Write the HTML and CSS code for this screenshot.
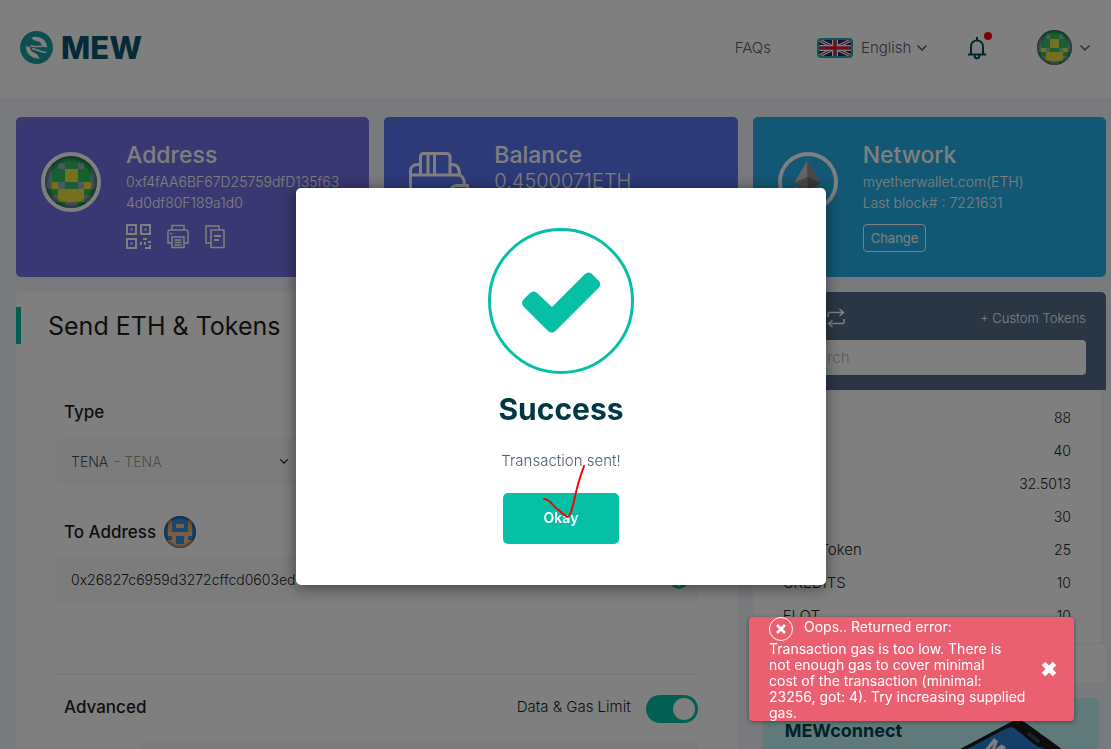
FILE: index.html
```html
<!DOCTYPE html>
<html lang="en">
<head>
    <meta charset="UTF-8">
    <meta name="viewport" content="width=device-width, initial-scale=1.0">
    <title>MEW - Send ETH &amp; Tokens</title>
    <link rel="stylesheet" href="styles.css">
</head>
<body>
    <!-- shared icons -->
    <svg class="sprite" aria-hidden="true">
        <symbol id="chevron" viewBox="0 0 12 8">
            <path d="M1.5 1.5 6 6l4.500-4.500" fill="none" stroke="currentColor" stroke-width="1.500"/>
        </symbol>
        <symbol id="blockie-green" viewBox="0 0 8 8">
            <clipPath id="round"><circle cx="4" cy="4" r="4"/></clipPath>
            <radialGradient id="shade"><stop offset=".75" stop-color="#000" stop-opacity="0"/><stop offset="1" stop-color="#000" stop-opacity=".4"/></radialGradient>
            <g clip-path="url(#round)" shape-rendering="crispEdges">
                <path fill="#30c060" d="M0 0h8v8H0z"/>
                <path fill="#8fb6c8" d="M0 1h1v4H0zM7 1h1v4H7zM2 1h1v1H2zM5 1h1v1H5zM2 4h1v1H2zM5 4h1v1H5zM1 6h1v1H1zM6 6h1v1H6zM3 7h2v1H3z"/>
                <path fill="#e8e03a" d="M3 2h2v2H3zM1 4h1v1H1zM6 4h1v1H6zM2 5h4v2H2z"/>
            </g>
            <circle cx="4" cy="4" r="4" fill="url(#shade)"/>
        </symbol>
    </svg>

    <header class="header">
        <a class="logo" href="#">
            <svg width="33" height="33" viewBox="0 0 33 33" aria-hidden="true">
                <circle cx="16.500" cy="16.500" r="16.500" fill="#1a9da0"/>
                <path fill="#fff" d="M11.500 6.500C18 4 27 8 27 16.500l-5-1c-.5-3-2-5-5-5.500-2-.3-4-.5-5.500-3.500z"/>
                <path fill="#fff" d="M6 14.500C5.500 22 11 28 20 27.500c-2-1-1.500-3-3-4.500-3-1-7-3-7-7-1.500 0-3-.5-4-1.500z"/>
                <path fill="none" stroke="#fff" stroke-width="1.500" d="M10 15.500c2-1.500 4 .5 6 0h6M12 17.500c2 .5 3 1 5 1.500s5 2 9 2.500"/>
            </svg>
            <span>MEW</span>
        </a>
        <nav class="nav">
            <a class="nav-link" href="#">FAQs</a>
            <label class="language">
                <svg width="36" height="20" viewBox="0 0 36 20" role="img" aria-label="United Kingdom">
                    <rect x="1" y="1" width="34" height="18" rx="2" fill="#052f8c"/>
                    <path d="M2 2l32 16M34 2L2 18" stroke="#fff" stroke-width="3.500"/>
                    <path d="M2 2l32 16M34 2L2 18" stroke="#d8203c" stroke-width="1.200"/>
                    <path d="M18 1v18M1 10h34" stroke="#fff" stroke-width="6"/>
                    <path d="M18 1v18M1 10h34" stroke="#d8203c" stroke-width="3.500"/>
                    <rect x="1" y="1" width="34" height="18" rx="3" fill="none" stroke="#10b8a4" stroke-width="2"/>
                </svg>
                <select aria-label="Language"><option>English</option></select>
                <svg class="chevron" width="12" height="8" aria-hidden="true"><use href="#chevron"/></svg>
            </label>
            <button class="bell" type="button" aria-label="Notifications">
                <svg width="20" height="24" viewBox="0 0 20 24" fill="none" stroke="#00505e" stroke-width="2">
                    <path d="M10 1v3M1 18.500h18M4 18v-7c0-4 2.500-6.500 6-6.500s6 2.500 6 6.500v7M7.500 19c0 4.500 5 4.500 5 0"/>
                </svg>
                <span class="dot"></span>
            </button>
            <button class="account" type="button" aria-label="Account">
                <svg width="35" height="35"><use href="#blockie-green"/></svg>
                <svg class="chevron" width="12" height="8"><use href="#chevron"/></svg>
            </button>
        </nav>
    </header>

    <main class="content">
        <section class="card card-address">
            <svg class="card-avatar" width="60" height="60" aria-hidden="true"><use href="#blockie-green"/></svg>
            <div>
                <h2>Address</h2>
                <p>0xf4fAA6BF67D25759dfD135f63<br>4d0df80F189a1d0</p>
                <div class="card-tools">
                    <button type="button" aria-label="QR code">
                        <svg width="25" height="25" viewBox="0 0 25 25" fill="none" stroke="#fff" stroke-width="2">
                            <path d="M1 1h9v9H1zM15 1h9v9h-9zM1 15h9v9H1z"/>
                            <path fill="#fff" stroke="none" d="M4.500 4.500h2v2h-2zM18.500 4.500h2v2h-2zM4.500 18.500h2v2h-2zM17 14h4v2h-4zM14 18h2v3h-2zM18 18h2v3h-2zM22 17h3v2h-3zM23 21h2v4h-6v-2h4z"/>
                        </svg>
                    </button>
                    <button type="button" aria-label="Print">
                        <svg width="22" height="25" viewBox="0 0 22 25" fill="none" stroke="#fff" stroke-width="1.500">
                            <path d="M5 6V1.500h12V6M5 19H1V8c0-1 .8-2 2-2h16c1.200 0 2 1 2 2v11h-4M5 13h12v10.500H5zM7.500 16h7M7.500 18.500h7M7.500 21h7M3 9.500h2"/>
                        </svg>
                    </button>
                    <button type="button" aria-label="Copy">
                        <svg width="20" height="25" viewBox="0 0 20 25" fill="none" stroke="#fff" stroke-width="1.500">
                            <path d="M6 19H1V2h13v4M6 6h13v17.500H6z"/>
                            <path stroke-width="2" d="M9 12h7M9 16h5"/>
                        </svg>
                    </button>
                </div>
            </div>
        </section>

        <section class="card card-balance">
            <svg width="60" height="60" viewBox="0 0 60 60" fill="none" stroke="#fff" stroke-width="3" aria-hidden="true">
                <path d="M11.500 23V5c0-2 1-3.500 3-3.500h23c2 0 3.500 1.500 3.500 3.500v18M19 2v21M25.500 2v21"/>
                <path d="M11.500 12.500H9c-5 0-7.500 3-7.500 6.500v33c0 4 2 6 6 6h42c4 0 6-2 6-6v-5M41 12.500h2c5 0 7.500 3.500 7.500 10.500M1.500 23H49c4 0 6.500 4 6.500 10"/>
                <path d="M58.500 33.500H48c-9 0-9 14 0 14h10.500z"/>
            </svg>
            <div>
                <h2>Balance</h2>
                <p class="amount">0.4500071ETH</p>
            </div>
        </section>

        <section class="card card-network">
            <svg width="60" height="60" viewBox="0 0 60 60" aria-hidden="true">
                <circle cx="30" cy="30" r="28" fill="none" stroke="#fff" stroke-width="4"/>
                <path fill="#c8c8c8" d="M29.500 8 16 31l13.500-6z"/>
                <path fill="#929292" d="M29.500 8v17L43 31z"/>
                <path fill="#949494" d="M16 31l13.500-6v14z"/>
                <path fill="#6e6e6e" d="M43 31l-13.500-6v14z"/>
                <path fill="#d2d2d2" d="M16 34l13.500 8L43 34 29.500 53z"/>
            </svg>
            <div>
                <h2>Network</h2>
                <p>myetherwallet.com(ETH)<br>Last block# : 7221631</p>
                <button class="change" type="button">Change</button>
            </div>
        </section>

        <form class="panel send">
            <h1 class="send-title">Send ETH &amp; Tokens</h1>
            <div class="send-body">
                <div class="field">
                    <label class="field-label" for="type">Type</label>
                    <div class="type-box">
                        <select id="type"><option>TENA</option></select>
                        <span class="type-name">- TENA</span>
                        <svg class="chevron" width="10" height="7" aria-hidden="true"><use href="#chevron"/></svg>
                    </div>
                </div>
                <div class="field">
                    <div class="field-head">
                        <label class="field-label" for="to">To Address</label>
                        <svg width="32" height="32" viewBox="0 0 8 8" aria-hidden="true">
                            <g clip-path="url(#round)" shape-rendering="crispEdges">
                                <path fill="#3491dd" d="M0 0h8v8H0z"/>
                                <path fill="#f0b060" d="M1 1h1v4H1zM6 1h1v4H6z"/>
                                <path fill="#efbd94" d="M3 2h2v1H3zM1 4h6v1H1zM2 5h1v1H2zM5 5h1v1H5zM0 6h3v2H0zM5 6h3v2H5zM3 7h2v1H3z"/>
                            </g>
                            <circle cx="4" cy="4" r="4" fill="url(#shade)"/>
                        </svg>
                    </div>
                    <div class="to-box">
                        <input id="to" type="text" value="0x26827c6959d3272cffcd0603ed">
                        <svg width="18" height="18" viewBox="0 0 18 18" aria-hidden="true">
                            <circle cx="9" cy="9" r="9" fill="#05c0a5"/>
                            <path d="M4 8.500 9 14l5-8" fill="none" stroke="#fff" stroke-width="2"/>
                        </svg>
                    </div>
                </div>
                <div class="advanced">
                    <h3>Advanced</h3>
                    <label for="gas">Data &amp; Gas Limit</label>
                    <input class="toggle" id="gas" type="checkbox" checked>
                </div>
                <input class="data-input" type="text" aria-label="Data">
            </div>
        </form>

        <aside class="side">
            <section class="panel tokens">
                <div class="tokens-head">
                    <div class="tokens-bar">
                        <h2>Tokens</h2>
                        <button type="button" aria-label="Refresh">
                            <svg width="18" height="20" viewBox="0 0 18 20" fill="none" stroke="currentColor" stroke-width="1.500">
                                <path d="M1 9V6c0-1 .8-1.500 1.500-1.500H16M12.500 1 16.500 4.500 12.500 8M17 11v3c0 1-.8 1.500-1.500 1.500H2M5.500 12l-4 3.500 4 3.500"/>
                            </svg>
                        </button>
                        <a href="#">+ Custom Tokens</a>
                    </div>
                    <input type="search" placeholder="Search" aria-label="Search tokens">
                </div>
                <div class="tokens-list">
                    <table>
                        <tr><td></td><td>88</td></tr>
                        <tr><td></td><td>40</td></tr>
                        <tr><td></td><td>32.5013</td></tr>
                        <tr><td></td><td>30</td></tr>
                        <tr><td>OmniToken</td><td>25</td></tr>
                        <tr><td>CREDITS</td><td>10</td></tr>
                        <tr><td>FLOT</td><td>10</td></tr>
                    </table>
                    <span class="thumb"></span>
                </div>
                <div class="tokens-foot"></div>
            </section>
            <a class="banner" href="#">
                <strong>MEWconnect</strong>
                <svg width="150" height="90" viewBox="0 0 150 90" aria-hidden="true">
                    <path fill="#15181f" d="M-100 90 62 4q8-4 15 1l110 80z"/>
                    <path fill="#2c7fcf" d="M-92 90 54 12q7-4 11-2l8 6q4 4 8 7l8 6q4 0 8 3l80 58z"/>
                    <path d="m80 16 9 7" stroke="#3b4452" stroke-width="4" stroke-linecap="round"/>
                    <text class="banner-mark" x="36" y="30" transform="rotate(38 36 30)">MEW</text>
                </svg>
            </a>
        </aside>
    </main>

    <div class="backdrop">
        <div class="modal" role="dialog" aria-labelledby="modal-title">
            <svg width="146" height="146" viewBox="0 0 146 146" aria-hidden="true">
                <circle cx="73" cy="73" r="71.500" fill="none" stroke="#05c0a5" stroke-width="3"/>
                <path fill="#05c0a5" d="M60 103 35.500 78.500q-3-3.500 0-7L42 65q3.500-3 7 0l15 14L97 46q3.500-3 7 0l7 7q2.500 3 0 6.500L67.500 103q-3.500 3-7.500 0z"/>
            </svg>
            <h2 id="modal-title">Success</h2>
            <p>Transaction sent!</p>
            <button class="okay" type="button">
                Okay
                <svg class="scribble" width="44" height="56" viewBox="0 0 44 56" fill="none" stroke="#f00" stroke-width="2" stroke-linecap="round" aria-hidden="true">
                    <path d="M1 35c5 0 7 4 12 9 5 4 10 9 12 9 3-2 4-8 6-16 2-10 6-24 10-35"/>
                </svg>
            </button>
        </div>
    </div>

    <div class="toast" role="alert">
        <div class="toast-text">
            <div class="toast-title">
                <svg width="24" height="24" viewBox="0 0 24 24" fill="none" stroke="#fff" aria-hidden="true">
                    <circle cx="12" cy="12" r="11.500"/>
                    <path stroke-width="2.500" d="m8 8 8 8m0-8-8 8"/>
                </svg>
                <span>Oops.. Returned error:</span>
            </div>
            <p>Transaction gas is too low. There is<br>not enough gas to cover minimal<br>cost of the transaction (minimal:<br>23256, got: 4). Try increasing supplied<br>gas.</p>
        </div>
        <button type="button" aria-label="Close">
            <svg width="16" height="16" viewBox="0 0 16 16" stroke="#fff" stroke-width="5"><path d="m2.500 2.500 11 11m0-11-11 11"/></svg>
        </button>
    </div>
</body>
</html>
```

FILE: styles.css
```css
* {
    box-sizing: border-box;
}

body {
    height: 100vh;
    margin: 0;
    overflow: hidden;
    background-color: #f2f4fb;
    color: #1d1d1d;
    font-family: Inter, "Open Sans", sans-serif;
    font-size: 14px;
    font-weight: 300;
}

h1, h2, h3, p {
    margin: 0;
}

svg {
    display: block;
    flex: none;
}

a {
    color: inherit;
    text-decoration: none;
}

button, input, select {
    font: inherit;
    color: inherit;
}

button {
    padding: 0;
    border: none;
    background: none;
    cursor: pointer;
}

select {
    appearance: none;
    padding: 0;
    border: none;
    background: none;
}

.sprite {
    position: absolute;
    width: 0;
    height: 0;
}

/* header */
.header {
    display: flex;
    align-items: center;
    justify-content: space-between;
    height: 97px;
    padding: 0 20px 2px;
    background-color: #fff;
}

.logo {
    display: flex;
    align-items: center;
    gap: 8px;
    color: #0b5470;
    font-size: 31px;
    font-weight: 800;
}

.nav {
    display: flex;
    align-items: center;
    color: #506175;
    font-size: 15px;
}

.nav-link {
    margin-right: 46px;
}

.language {
    display: flex;
    align-items: center;
    margin-right: 39px;
}

.language select {
    margin: 0 4px 0 8px;
}

.bell {
    position: relative;
    margin-right: 50px;
}

.dot {
    position: absolute;
    top: -4px;
    right: -5px;
    width: 8px;
    height: 8px;
    border-radius: 50%;
    background-color: #f00;
}

.account {
    display: flex;
    align-items: center;
    gap: 7px;
}

/* content */
.content {
    display: grid;
    grid-template-columns: repeat(3, 1fr);
    gap: 15px;
    padding: 20px 5px 0 16px;
}

.card {
    display: flex;
    gap: 25px;
    height: 160px;
    padding: 25px;
    border-radius: 5px;
    color: #fff;
    white-space: nowrap;
}

.card > svg {
    margin-top: 10px;
}

.card-address {
    background-color: #7270e4;
}

.card-balance {
    background-color: #5a74f0;
}

.card-network {
    background-color: #25b0e8;
}

.card-avatar {
    border: 4px solid #fff;
    border-radius: 50%;
}

.card h2 {
    margin-bottom: 3px;
    font-size: 23px;
    font-weight: 500;
    line-height: 26px;
}

.card p {
    line-height: 21px;
}

.card .amount {
    font-size: 20px;
}

.card-tools {
    display: flex;
    gap: 16px;
    margin-top: 11px;
}

.change {
    height: 28px;
    margin-top: 11px;
    padding: 0 7px;
    border: 1px solid #fff;
    border-radius: 4px;
    font-size: 13px;
    font-weight: 400;
}

.panel {
    border-radius: 5px;
    background-color: #fff;
}

/* send form */
.send {
    grid-column: span 2;
}

.send-title {
    position: relative;
    padding: 19px 32px 18px;
    border-bottom: 2px solid #f7f7f7;
    font-size: 25px;
    font-weight: 400;
    line-height: 30px;
}

.send-title::before {
    content: "";
    position: absolute;
    top: 15px;
    left: 0;
    width: 5px;
    height: 37px;
    background-color: #05c0a5;
}

.send-body {
    padding: 39px 40px 30px;
}

.field {
    margin-bottom: 31px;
}

.field-label {
    display: block;
    padding-left: 8px;
    font-size: 17px;
    font-weight: 500;
    line-height: 24px;
}

.field-head {
    display: flex;
    align-items: center;
    gap: 8px;
    margin-bottom: 8px;
}

.type-box, .to-box {
    position: relative;
    display: flex;
    align-items: center;
}

.type-box {
    width: 50%;
    margin-top: 14px;
}

.type-box select, .to-box input, .data-input {
    width: 100%;
    height: 47px;
    padding: 0 15px 1px;
    border: none;
    border-radius: 5px;
    background-color: #f9f9f9;
}

.type-box select {
    color: #435066;
}

.type-name {
    position: absolute;
    left: 58px;
    color: #999;
    pointer-events: none;
}

.type-box .chevron {
    position: absolute;
    left: 223px;
    pointer-events: none;
}

.to-box svg {
    position: absolute;
    right: 10px;
}

.advanced {
    display: flex;
    gap: 15px;
    margin: 70px 0 19px;
    padding-top: 20px;
    border-top: 2px solid #f5f5f5;
    line-height: 24px;
}

.advanced h3 {
    flex: 1;
    padding-left: 8px;
    font-size: 17px;
    font-weight: 500;
}

.advanced label {
    font-size: 15px;
}

.toggle {
    appearance: none;
    width: 52px;
    height: 28px;
    margin: 0;
    padding: 3px;
    border-radius: 14px;
    background-color: #05c0a5;
}

.toggle::before {
    content: "";
    display: block;
    width: 22px;
    height: 22px;
    margin-left: auto;
    border-radius: 50%;
    background-color: #fff;
}

.data-input {
    display: block;
    width: 87%;
    margin-left: auto;
}

/* tokens */
.tokens {
    overflow: hidden;
}

.tokens-head {
    padding: 14px 20px 15px;
    background-color: #546c88;
    color: #fff;
}

.tokens-bar {
    display: flex;
    align-items: center;
    height: 24px;
    margin-bottom: 10px;
    font-size: 13px;
}

.tokens-bar h2 {
    width: 54px;
    font-size: 14px;
    font-weight: 500;
}

.tokens-bar a {
    margin-left: auto;
}

.tokens-head input {
    display: block;
    width: 100%;
    height: 35px;
    padding: 0 28px;
    border: none;
    border-radius: 4px;
    background-color: #fff;
    font-size: 15px;
}

.tokens-head input::placeholder {
    color: #bbb;
}

.tokens-list {
    position: relative;
    height: 254px;
    padding: 11px 30px 0;
    border-right: 5px solid #f5f5f5;
    border-bottom: 1px solid #eee;
    overflow: hidden;
}

.tokens-list table {
    width: 100%;
    border-collapse: collapse;
}

.tokens-list td {
    height: 33px;
    padding: 0;
    font-size: 15px;
}

.tokens-list td:last-child {
    font-size: 14px;
    text-align: right;
}

.thumb {
    position: absolute;
    top: 1px;
    right: -5px;
    width: 5px;
    height: 17px;
    border-radius: 2px;
    background-color: #888;
}

.tokens-foot {
    height: 39px;
}

.banner {
    display: flex;
    justify-content: space-between;
    height: 110px;
    margin: 15px 7px 0 10px;
    padding: 20px 0 0 22px;
    border-radius: 5px;
    background-color: #c0f2f4;
    color: #004350;
    overflow: hidden;
}

.banner strong {
    font-size: 18px;
    font-weight: 700;
    line-height: 26px;
}

.banner-mark {
    fill: #fff;
    font-size: 18px;
    font-weight: 800;
}

/* success dialog */
.backdrop {
    position: fixed;
    inset: 0;
    display: flex;
    align-items: center;
    justify-content: center;
    padding: 24px 0 0 11px;
    background-color: rgba(0, 0, 0, 0.5);
}

.modal {
    display: flex;
    flex-direction: column;
    align-items: center;
    width: 530px;
    padding: 40px 40px 41px;
    border-radius: 5px;
    background-color: #fff;
    box-shadow: 0 2px 16px rgba(0, 0, 0, 0.5);
}

.modal h2 {
    margin-top: 15px;
    color: #003945;
    font-size: 30px;
    font-weight: 700;
    line-height: 40px;
}

.modal p {
    margin: 22px 0;
    color: #506175;
    font-size: 15px;
    line-height: 20px;
}

.okay {
    position: relative;
    width: 116px;
    height: 51px;
    padding-bottom: 2px;
    border-radius: 5px;
    background-color: #05c0a5;
    color: #fff;
    font-weight: 600;
}

.scribble {
    position: absolute;
    top: -29px;
    left: 40px;
}

/* error toast */
.toast {
    position: fixed;
    right: 37px;
    bottom: 28px;
    display: flex;
    align-items: center;
    justify-content: space-between;
    width: 325px;
    height: 104px;
    padding: 0 17px 0 20px;
    border-radius: 4px;
    background-color: #eb6070;
    color: #fff;
    font-weight: 400;
    line-height: 16px;
    white-space: nowrap;
    box-shadow: 0 1px 4px rgba(0, 0, 0, 0.4);
}

.toast-title {
    display: flex;
    gap: 11px;
    line-height: 20px;
}
```
